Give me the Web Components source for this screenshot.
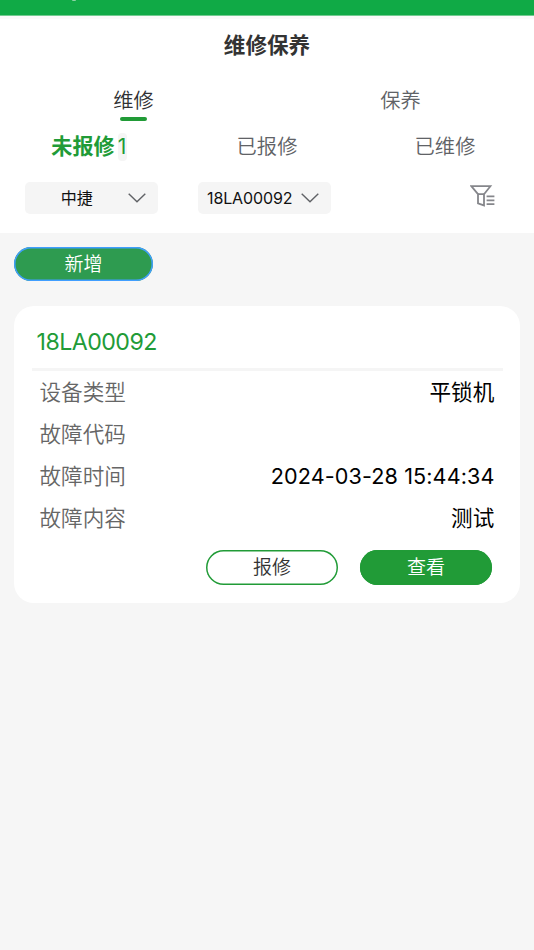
<!DOCTYPE html>
<html lang="zh-CN">
<head>
<meta charset="utf-8">
<title>维修保养</title>
<style>
  body {
    margin: 0;
    background: #f6f6f6;
    color: #111;
    font-family: Inter, "Noto Sans CJK SC", sans-serif;
  }
</style>
</head>
<body>
<repair-page></repair-page>

<script>
class StatusStrip extends HTMLElement {
  constructor() {
    super();
    this.attachShadow({ mode: "open" }).innerHTML = `
      <style>
        :host {
          display: block;
          box-sizing: border-box;
          height: 19px;
          background: linear-gradient(#10aa46 0 15px, #72cb90 15px 16px, #fafafa 16px);
        }
        i {
          display: block;
          width: 4px;
          height: 1px;
          margin-left: 72px;
          border-radius: 0 0 2px 2px;
          background: #8bd3a4;
        }
      </style>
      <i></i>
    `;
  }
}

class MainTab extends HTMLElement {
  constructor() {
    super();
    this.attachShadow({ mode: "open" }).innerHTML = `
      <style>
        :host {
          display: flex;
          flex: 1;
          flex-direction: column;
          align-items: center;
          font-size: 20.3px;
          font-weight: 350;
          line-height: 30px;
          color: #606266;
        }
        :host([active]) { color: #303133; }
        i {
          width: 27px;
          height: 4px;
          margin-top: 1px;
          border-radius: 2px;
        }
        :host([active]) i { background: #219b37; }
      </style>
      <span><slot></slot></span>
      <i></i>
    `;
  }
}

class SubTab extends HTMLElement {
  constructor() {
    super();
    this.attachShadow({ mode: "open" }).innerHTML = `
      <style>
        :host {
          display: flex;
          flex: 1;
          justify-content: center;
          align-items: center;
          font-size: 20.3px;
          font-weight: 350;
          line-height: 28px;
          color: #606266;
        }
        :host([active]) {
          font-size: 21.1px;
          font-weight: 700;
          color: #219b37;
        }
        b {
          width: 9px;
          margin-left: 3px;
          border-radius: 4px;
          background: #f5f5f5;
          font-weight: 400;
          text-align: center;
        }
        b:empty { display: none; }
      </style>
      <slot></slot><b></b>
    `;
  }

  connectedCallback() {
    this.shadowRoot.querySelector("b").textContent = this.getAttribute("count") || "";
  }
}

class DropSelect extends HTMLElement {
  constructor() {
    super();
    this.attachShadow({ mode: "open" }).innerHTML = `
      <style>
        :host {
          display: flex;
          align-items: center;
          box-sizing: border-box;
          width: 133px;
          height: 32px;
          padding: 0 12.5px 0 7px;
          border-radius: 5px;
          background: #f5f5f5;
          font-size: 16px;
        }
        span {
          flex: 1;
          padding-right: 6px;
          line-height: 24px;
          letter-spacing: -.1px;
          text-align: center;
          white-space: nowrap;
        }
        svg { flex: none; }
      </style>
      <span><slot></slot></span>
      <svg width="18" height="10" viewBox="0 0 18 10" fill="none" stroke="#606266" stroke-width="1.4">
        <path d="M.7 .7 9 8.8 17.3 .7"/>
      </svg>
    `;
  }
}

class FilterIcon extends HTMLElement {
  constructor() {
    super();
    this.attachShadow({ mode: "open" }).innerHTML = `
      <style>
        :host { display: block; width: 25px; height: 22px; }
        svg { display: block; }
      </style>
      <svg width="25" height="22" viewBox="0 0 25 22" fill="none" stroke="#85868b" stroke-width="1.8">
        <path d="M1.3 1.2H20.4L14 9.2V20.4L8 18.4V9.2Z"/>
        <path d="M8 9.2H14M16.6 11.4H24.4M16.6 15.3H24.4M16.6 19.2H24.4"/>
      </svg>
    `;
  }
}

class PillButton extends HTMLElement {
  constructor() {
    super();
    this.attachShadow({ mode: "open" }).innerHTML = `
      <style>
        :host {
          display: block;
          width: 132px;
          --edge: #219b37;
        }
        :host([kind="add"]) {
          width: 139px;
          --edge: #409eff;
        }
        button {
          display: block;
          box-sizing: border-box;
          width: 100%;
          height: 34.5px;
          padding: 1px 0 0;
          border: 0;
          border-radius: 18px;
          background: #219b37;
          box-shadow: inset 0 0 0 1.5px var(--edge);
          color: #fff;
          font: inherit;
          font-size: 19px;
          font-weight: 350;
          line-height: 33px;
        }
        :host([kind="plain"]) button {
          background: #fff;
          color: #333;
        }
        :host([kind="add"]) button {
          height: 34px;
          background: #2e9b50;
        }
      </style>
      <button><slot></slot></button>
    `;
  }
}

class InfoRow extends HTMLElement {
  constructor() {
    super();
    this.attachShadow({ mode: "open" }).innerHTML = `
      <style>
        :host {
          display: flex;
          justify-content: space-between;
          box-sizing: border-box;
          height: 42px;
          padding: 0 25.5px;
          font-size: 21.6px;
          line-height: 43px;
          color: #000;
        }
        label {
          color: #666;
          font-weight: 350;
        }
        span { letter-spacing: .1px; }
      </style>
      <label></label>
      <span><slot></slot></span>
    `;
  }

  connectedCallback() {
    this.shadowRoot.querySelector("label").textContent = this.getAttribute("label");
  }
}

class DeviceCard extends HTMLElement {
  constructor() {
    super();
    this.attachShadow({ mode: "open" }).innerHTML = `
      <style>
        :host {
          display: block;
          box-sizing: border-box;
          height: 296.5px;
          margin: 25px 14px 0;
          border-radius: 20px;
          background: #fff;
        }
        h2 {
          margin: 0 17.5px;
          padding: 9px 0 0 5px;
          height: 53px;
          border-bottom: 3px solid #f5f5f5;
          font-size: 23.2px;
          font-weight: 400;
          line-height: 54px;
          letter-spacing: -.55px;
          color: #219b37;
        }
        footer {
          display: flex;
          justify-content: flex-end;
          gap: 22px;
          padding: 11px 28px 0;
        }
      </style>
      <h2></h2>
      <slot></slot>
      <footer><slot name="actions"></slot></footer>
    `;
  }

  connectedCallback() {
    this.shadowRoot.querySelector("h2").textContent = this.getAttribute("code");
  }
}

class RepairPage extends HTMLElement {
  constructor() {
    super();
    this.attachShadow({ mode: "open" }).innerHTML = `
      <style>
        :host { display: block; height: 950px; overflow: hidden; }
        header { height: 233px; background: #fff; }
        h1 {
          margin: 0;
          padding-top: 10px;
          font-size: 21.6px;
          font-weight: 700;
          line-height: 32px;
          text-align: center;
          color: #333;
        }
        nav { display: flex; }
        .main { padding-top: 25px; }
        .sub { padding-top: 12px; }
        .filters {
          display: flex;
          align-items: center;
          padding: 21px 39px 0 25px;
        }
        .filters drop-select + drop-select { margin-left: 40px; }
        filter-icon { margin: -5px 0 0 auto; }
        main { padding-top: 14px; }
        main > pill-button { margin-left: 14px; }
      </style>
      <header>
        <status-strip></status-strip>
        <h1>维修保养</h1>
        <nav class="main">
          <main-tab active>维修</main-tab>
          <main-tab>保养</main-tab>
        </nav>
        <nav class="sub">
          <sub-tab active count="1">未报修</sub-tab>
          <sub-tab>已报修</sub-tab>
          <sub-tab>已维修</sub-tab>
        </nav>
        <div class="filters">
          <drop-select>中捷</drop-select>
          <drop-select>18LA00092</drop-select>
          <filter-icon></filter-icon>
        </div>
      </header>
      <main>
        <pill-button kind="add">新增</pill-button>
        <device-card code="18LA00092">
          <info-row label="设备类型">平锁机</info-row>
          <info-row label="故障代码"></info-row>
          <info-row label="故障时间">2024-03-28 15:44:34</info-row>
          <info-row label="故障内容">测试</info-row>
          <pill-button slot="actions" kind="plain">报修</pill-button>
          <pill-button slot="actions">查看</pill-button>
        </device-card>
      </main>
    `;
  }
}

customElements.define("status-strip", StatusStrip);
customElements.define("main-tab", MainTab);
customElements.define("sub-tab", SubTab);
customElements.define("drop-select", DropSelect);
customElements.define("filter-icon", FilterIcon);
customElements.define("pill-button", PillButton);
customElements.define("info-row", InfoRow);
customElements.define("device-card", DeviceCard);
customElements.define("repair-page", RepairPage);
</script>
</body>
</html>
